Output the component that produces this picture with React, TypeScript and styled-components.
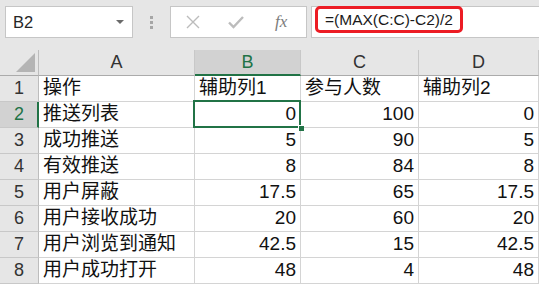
import styled, { createGlobalStyle } from 'styled-components';

const GlobalStyle = createGlobalStyle`
  html, body {
    margin: 0;
    padding: 0;
    background: #e6e6e6;
    overflow: hidden;
  }
  body {
    font-family: "Liberation Sans", "Noto Sans CJK SC", sans-serif;
  }
`;

const GREEN = '#217346';
const GRID = '#d4d4d4';

const Page = styled.div`
  width: 539px;
  height: 284px;
  display: flex;
  flex-direction: column;
  background: #e6e6e6;
  overflow: hidden;
`;

const Toolbar = styled.div`
  height: 50px;
  box-sizing: border-box;
  display: flex;
  align-items: flex-start;
  padding: 6px 0 0 5px;
`;

const NameBox = styled.div`
  width: 128px;
  height: 32px;
  box-sizing: border-box;
  background: #fff;
  border: 1px solid #c6c6c6;
  display: flex;
  align-items: center;
  justify-content: space-between;
  padding: 0 8px 0 7px;
  font-size: 16.5px;
  color: #262626;
`;

const Caret = styled.span`
  width: 0;
  height: 0;
  border-left: 4px solid transparent;
  border-right: 4px solid transparent;
  border-top: 4px solid #6a6a6a;
`;

const Dots = styled.div`
  width: 37px;
  height: 32px;
  display: flex;
  flex-direction: column;
  align-items: center;
  justify-content: center;
  gap: 2px;

  span {
    width: 3px;
    height: 3px;
    background: #a6a6a6;
  }
`;

const ButtonBox = styled.div`
  width: 137px;
  height: 32px;
  box-sizing: border-box;
  background: #fff;
  border: 1px solid #c6c6c6;
  display: flex;
  align-items: center;
  padding-left: 14px;
  gap: 26px;
`;

const Fx = styled.span`
  font-family: "Liberation Serif", serif;
  font-style: italic;
  font-size: 17px;
  color: #7b7b7b;
  margin-left: 4px;
`;

const FormulaBox = styled.div`
  flex: 1;
  height: 32px;
  box-sizing: border-box;
  margin-left: 4px;
  background: #fff;
  border: 1px solid #c6c6c6;
  border-right: none;
  display: flex;
  align-items: flex-start;
  padding-left: 3px;
`;

const Highlight = styled.span`
  margin-top: -1px;
  height: 27px;
  box-sizing: border-box;
  border: 3px solid #ec1c24;
  border-radius: 5px;
  padding: 0 7px 0 7px;
  display: flex;
  align-items: center;
  font-size: 15.5px;
  color: #1a1a1a;
  white-space: nowrap;
`;

const Sheet = styled.div`
  display: grid;
  grid-template-columns: 39px 156px 106px 118px 1fr;
  grid-auto-rows: 26px;
  background: #fff;
`;

const Corner = styled.div`
  background: #e6e6e6;
  border-right: 1px solid #bdbdbd;
  border-bottom: 1px solid #ababab;
  display: flex;
  align-items: flex-end;
  justify-content: flex-end;
  padding: 0 3px 3px 0;
`;

const ColHead = styled.div<{ $active?: boolean }>`
  background: ${({ $active }) => ($active ? '#d2d2d2' : '#e6e6e6')};
  border-right: 1px solid #c8c8c8;
  border-bottom: ${({ $active }) => ($active ? `2px solid ${GREEN}` : '1px solid #ababab')};
  color: ${({ $active }) => ($active ? GREEN : '#333')};
  display: flex;
  align-items: center;
  justify-content: center;
  font-size: 18px;
  padding-top: ${({ $active }) => ($active ? '1px' : '0')};
`;

const RowHead = styled.div<{ $active?: boolean }>`
  background: ${({ $active }) => ($active ? '#d2d2d2' : '#e6e6e6')};
  border-right: ${({ $active }) => ($active ? `2px solid ${GREEN}` : '1px solid #bdbdbd')};
  border-bottom: 1px solid #c8c8c8;
  color: ${({ $active }) => ($active ? GREEN : '#333')};
  display: flex;
  align-items: center;
  justify-content: center;
  font-size: 18px;
  padding-left: ${({ $active }) => ($active ? '1px' : '0')};
`;

const Cell = styled.div<{ $num?: boolean; $selected?: boolean }>`
  position: relative;
  border-right: 1px solid ${GRID};
  border-bottom: 1px solid ${GRID};
  display: flex;
  align-items: flex-end;
  justify-content: ${({ $num }) => ($num ? 'flex-end' : 'flex-start')};
  padding: 0 ${({ $num }) => ($num ? '4px' : '0')} 1px ${({ $num }) => ($num ? '0' : '4px')};
  font-size: 19px;
  line-height: 24px;
  color: #111;
  white-space: nowrap;
  overflow: visible;

  ${({ $selected }) =>
    $selected &&
    `
    &::after {
      content: '';
      position: absolute;
      left: -2px;
      top: -2px;
      right: -1px;
      bottom: -1px;
      border: 2px solid ${GREEN};
      pointer-events: none;
    }
    &::before {
      content: '';
      position: absolute;
      right: -4px;
      bottom: -4px;
      width: 5px;
      height: 5px;
      background: ${GREEN};
      border-left: 1px solid #fff;
      border-top: 1px solid #fff;
      z-index: 2;
    }
  `}
`;

const rows: [string, string, string, string][] = [
  ['推送列表', '0', '100', '0'],
  ['成功推送', '5', '90', '5'],
  ['有效推送', '8', '84', '8'],
  ['用户屏蔽', '17.5', '65', '17.5'],
  ['用户接收成功', '20', '60', '20'],
  ['用户浏览到通知', '42.5', '15', '42.5'],
  ['用户成功打开', '48', '4', '48'],
];

export default function App() {
  return (
    <Page>
      <GlobalStyle />
      <Toolbar>
        <NameBox>
          B2
          <Caret />
        </NameBox>
        <Dots>
          <span />
          <span />
          <span />
        </Dots>
        <ButtonBox>
          <svg width="16" height="16" viewBox="0 0 16 16">
            <path d="M2 2 L14 14 M14 2 L2 14" stroke="#bcbcbc" strokeWidth="1.4" fill="none" />
          </svg>
          <svg width="18" height="16" viewBox="0 0 18 16">
            <path d="M2 8.5 L6.5 13 L16 3" stroke="#bcbcbc" strokeWidth="2.4" fill="none" />
          </svg>
          <Fx>fx</Fx>
        </ButtonBox>
        <FormulaBox>
          <Highlight>=(MAX(C:C)-C2)/2</Highlight>
        </FormulaBox>
      </Toolbar>
      <Sheet>
        <Corner>
          <svg width="19" height="19" viewBox="0 0 19 19">
            <path d="M19 0 L19 19 L0 19 Z" fill="#b4b4b4" />
          </svg>
        </Corner>
        <ColHead>A</ColHead>
        <ColHead $active>B</ColHead>
        <ColHead>C</ColHead>
        <ColHead>D</ColHead>

        <RowHead>1</RowHead>
        <Cell>操作</Cell>
        <Cell>辅助列1</Cell>
        <Cell>参与人数</Cell>
        <Cell>辅助列2</Cell>

        {rows.map(([name, b, c, d], i) => (
          <Row key={name} index={i + 2} name={name} b={b} c={c} d={d} />
        ))}
      </Sheet>
    </Page>
  );
}

function Row({ index, name, b, c, d }: { index: number; name: string; b: string; c: string; d: string }) {
  const active = index === 2;
  return (
    <>
      <RowHead $active={active}>{index}</RowHead>
      <Cell>{name}</Cell>
      <Cell $num $selected={active}>
        {b}
      </Cell>
      <Cell $num>{c}</Cell>
      <Cell $num>{d}</Cell>
    </>
  );
}
